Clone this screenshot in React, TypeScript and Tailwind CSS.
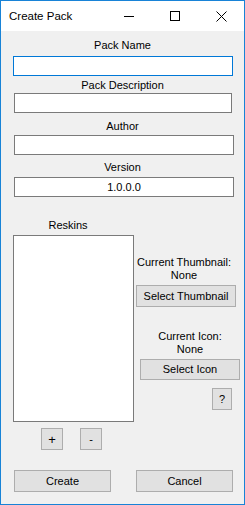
import React from "react";

const font = { fontFamily: '"Liberation Sans", Arial, sans-serif' };

function Btn({ className, children }: { className: string; children: React.ReactNode }) {
  return (
    <div
      className={`flex items-center justify-center border border-[#adadad] bg-[#e1e1e1] text-[11px] leading-[13px] text-black ${className}`}
    >
      {children}
    </div>
  );
}

export default function App() {
  return (
    <div
      className="flex h-[505px] w-[245px] flex-col border border-[#1883d7] bg-[#f0f0f0] text-[11px] leading-[13px] text-black"
      style={font}
    >
      {/* title bar */}
      <div className="flex h-[30px] shrink-0 items-center bg-white">
        <div className="ml-[8px] flex-1 text-[11.5px] leading-[14px] text-black">Create Pack</div>
        <div className="flex h-[30px] w-[46px] items-center justify-center">
          <svg width="10" height="10" viewBox="0 0 10 10">
            <line x1="0" y1="5.5" x2="10" y2="5.5" stroke="#000" strokeWidth="1" />
          </svg>
        </div>
        <div className="flex h-[30px] w-[46px] items-center justify-center">
          <svg width="10" height="10" viewBox="0 0 10 10">
            <rect x="0.5" y="0.5" width="9" height="9" fill="none" stroke="#000" strokeWidth="1" />
          </svg>
        </div>
        <div className="flex h-[30px] w-[46px] items-center justify-center">
          <svg width="11" height="11" viewBox="0 0 11 11">
            <line x1="0.5" y1="0.5" x2="10.5" y2="10.5" stroke="#000" strokeWidth="1" />
            <line x1="10.5" y1="0.5" x2="0.5" y2="10.5" stroke="#000" strokeWidth="1" />
          </svg>
        </div>
      </div>

      {/* fields */}
      <div className="flex flex-col">
        <div className="mt-[8px] h-[13px] text-center">Pack Name</div>
        <div className="mt-[4px] ml-[12px] h-[20px] w-[220px] border border-[#0078d7] bg-white" />
        <div className="mt-[3px] h-[13px] text-center">Pack Description</div>
        <div className="mt-[1px] ml-[13px] h-[20px] w-[218px] border border-[#7a7a7a] bg-white" />
        <div className="mt-[7px] h-[13px] text-center">Author</div>
        <div className="mt-[2px] ml-[13px] h-[20px] w-[220px] border border-[#7a7a7a] bg-white" />
        <div className="mt-[6px] h-[13px] text-center">Version</div>
        <div className="mt-[3px] ml-[13px] flex h-[20px] w-[220px] items-center justify-center border border-[#7a7a7a] bg-white">
          1.0.0.0
        </div>
      </div>

      {/* lower section */}
      <div className="flex">
        <div className="ml-[12px] flex w-[121px] flex-col">
          <div className="mt-[22px] h-[13px] w-[110px] text-center">Reskins</div>
          <div className="mt-[3px] h-[187px] w-[121px] border border-[#7a7a7a] bg-white" />
          <div className="mt-[6px] ml-[28px] flex gap-[17px]">
            <Btn className="h-[22px] w-[22px] text-[13px]">+</Btn>
            <Btn className="h-[22px] w-[22px]">-</Btn>
          </div>
        </div>
        <div className="ml-[2px] flex flex-col">
          <div className="mt-[59px] w-[96px] text-center">
            <div className="h-[13px]">Current Thumbnail:</div>
            <div className="h-[13px]">None</div>
          </div>
          <Btn className="mt-[3px] h-[22px] w-[100px]">Select Thumbnail</Btn>
          <div className="mt-[23px] ml-[4px] w-[100px] text-center">
            <div className="h-[13px]">Current Icon:</div>
            <div className="h-[13px]">None</div>
          </div>
          <Btn className="mt-[3px] ml-[4px] h-[21px] w-[100px]">Select Icon</Btn>
          <Btn className="mt-[8px] ml-[76px] h-[22px] w-[20px]">?</Btn>
        </div>
      </div>

      {/* bottom buttons */}
      <div className="mt-[20px] ml-[13px] flex gap-[25px]">
        <Btn className="h-[22px] w-[97px]">Create</Btn>
        <Btn className="h-[22px] w-[97px]">Cancel</Btn>
      </div>
    </div>
  );
}
